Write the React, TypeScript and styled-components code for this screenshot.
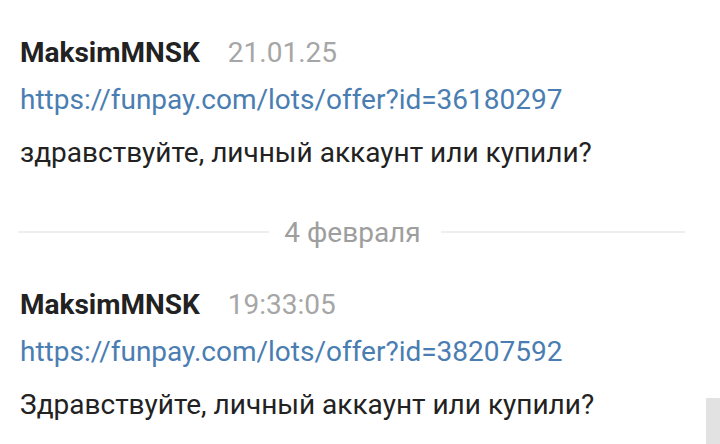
import styled, { createGlobalStyle } from 'styled-components';

const GlobalStyle = createGlobalStyle`
	html, body {
		margin: 0;
		padding: 0;
		background: #ffffff;
	}
	body {
		font-family: Roboto, "Noto Sans", Arial, sans-serif;
	}
`;

const Chat = styled.div`
	position: relative;
	width: 720px;
	height: 444px;
	overflow: hidden;
	background: #ffffff;
	display: flex;
	flex-direction: column;
	padding: 36px 0 0 20px;
	box-sizing: border-box;
`;

const Message = styled.div`
	display: flex;
	flex-direction: column;
`;

const Header = styled.div`
	display: flex;
	align-items: baseline;
	gap: 28px;
	height: 34px;
	line-height: 34px;
`;

const Author = styled.span`
	font-weight: 700;
	font-size: 28px;
	color: #222222;
`;

const Stamp = styled.span`
	font-size: 28px;
	color: #a6a6a6;
`;

const Link = styled.a`
	margin-top: 13px;
	font-size: 28px;
	line-height: 34px;
	color: #4a7db1;
	text-decoration: none;
`;

const Body = styled.div`
	margin-top: 19px;
	font-size: 28px;
	line-height: 34px;
	color: #222222;
`;

const Divider = styled.div`
	display: flex;
	align-items: center;
	margin: 45px 35px 39px -2px;
	height: 34px;
`;

const Rule = styled.div<{ $grow: number }>`
	flex: ${(p) => p.$grow} 1 0;
	height: 2px;
	background: #eeeeee;
`;

const DividerLabel = styled.span`
	font-size: 28px;
	color: #9e9e9e;
	padding: 0 20px 0 15px;
`;

const ScrollThumb = styled.div`
	position: absolute;
	right: 0;
	bottom: 0;
	width: 14px;
	height: 46px;
	background: #e2e2e2;
`;

type Msg = { author: string; time: string; url: string; text: string };

const ChatMessage: React.FC<Msg> = ({ author, time, url, text }) => (
	<Message>
		<Header>
			<Author>{author}</Author>
			<Stamp>{time}</Stamp>
		</Header>
		<Link href={url}>{url}</Link>
		<Body>{text}</Body>
	</Message>
);

export default function App() {
	return (
		<>
			<GlobalStyle />
			<Chat>
				<ChatMessage
					author="MaksimMNSK"
					time="21.01.25"
					url="https://funpay.com/lots/offer?id=36180297"
					text="здравствуйте, личный аккаунт или купили?"
				/>
				<Divider>
					<Rule $grow={252} />
					<DividerLabel>4 февраля</DividerLabel>
					<Rule $grow={245} />
				</Divider>
				<ChatMessage
					author="MaksimMNSK"
					time="19:33:05"
					url="https://funpay.com/lots/offer?id=38207592"
					text="Здравствуйте, личный аккаунт или купили?"
				/>
				<ScrollThumb />
			</Chat>
		</>
	);
}
